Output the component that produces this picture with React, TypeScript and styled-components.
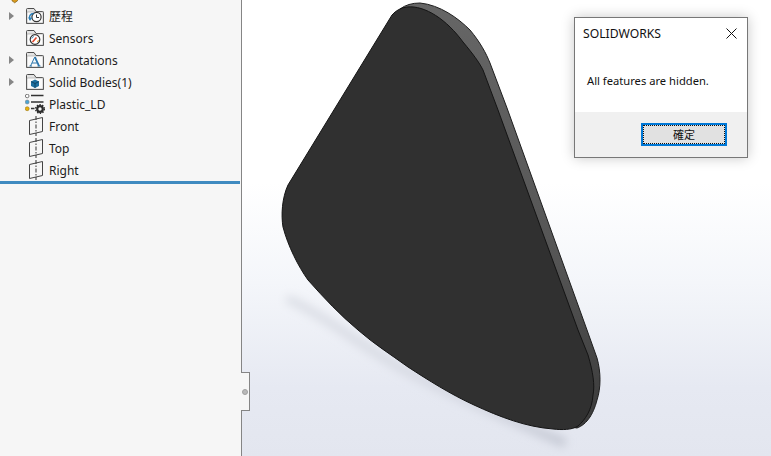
import React from "react";
import styled, { createGlobalStyle } from "styled-components";

const Global = createGlobalStyle`
  html, body { margin: 0; padding: 0; width: 771px; height: 456px; overflow: hidden; background: #fff; }
  #root { width: 771px; height: 456px; }
`;

const Page = styled.div`
  display: flex;
  width: 771px;
  height: 456px;
  overflow: hidden;
  font-family: "Noto Sans", "Open Sans", "Noto Sans CJK TC", sans-serif;
`;

const Sidebar = styled.aside`
  display: flex;
  flex-direction: column;
  width: 241px;
  flex: none;
  background: #f6f6f6;
  border-right: 1px solid #858585;
  overflow: hidden;
`;

const Tree = styled.ul`
  list-style: none;
  margin: -17px 0 0;
  padding: 0;
`;

const Row = styled.li`
  display: flex;
  align-items: center;
  height: 22px;
  padding-left: 9px;
  font-size: 12px;
  color: #1c1c1c;
`;

const ArrowSlot = styled.span`
  display: flex;
  width: 16px;
  flex: none;
`;

const Arrow = styled.span`
  width: 0;
  height: 0;
  border-left: 5px solid #868686;
  border-top: 4px solid transparent;
  border-bottom: 4px solid transparent;
`;

const IconSlot = styled.span`
  display: flex;
  width: 20px;
  height: 20px;
  margin-right: 4px;
  flex: none;
`;

const Divider = styled.div`
  height: 3px;
  background: #3f8ac0;
  width: 240px;
`;

const Viewport = styled.main`
  position: relative;
  flex: 1;
  background: linear-gradient(180deg, #ffffff 0%, #ffffff 40%, #f4f6fa 62%, #e6e9f2 85%, #e3e6ef 100%);
`;

const Model = styled.svg`
  position: absolute;
  inset: 0;
  width: 100%;
  height: 100%;
`;

const Grip = styled.div`
  position: absolute;
  left: -1px;
  top: 372px;
  width: 8px;
  height: 37px;
  background: #f6f6f6;
  border: 1px solid #858585;
  border-left: none;
  display: flex;
  align-items: center;
  justify-content: center;
`;

const GripDot = styled.span`
  width: 6px;
  height: 6px;
  border-radius: 50%;
  background: #b9b9b9;
  border: 1px solid #a0a0a0;
  box-sizing: border-box;
`;

const Dialog = styled.section`
  position: absolute;
  left: 332px;
  top: 17px;
  width: 174px;
  height: 141px;
  box-sizing: border-box;
  display: flex;
  flex-direction: column;
  background: #fff;
  border: 1px solid #777;
  box-shadow: 0 0 12px rgba(0, 0, 0, 0.22);
  font-family: "Noto Sans", "Open Sans", "Noto Sans CJK TC", sans-serif;
  color: #111;
`;

const TitleBar = styled.header`
  display: flex;
  align-items: center;
  justify-content: space-between;
  height: 28px;
  padding: 1px 10px 0 8px;
  font-size: 12.2px;
`;

const Message = styled.p`
  flex: 1;
  margin: 0;
  padding: 26px 0 0 12px;
  font-size: 11.2px;
`;

const Footer = styled.footer`
  display: flex;
  justify-content: flex-end;
  height: 45px;
  box-sizing: border-box;
  padding: 11px 20px 0 0;
  background: #f0f0f0;
`;

const OkButton = styled.button`
  width: 86px;
  height: 23px;
  box-sizing: border-box;
  padding: 0 0 2px;
  border: 2px solid #0078d7;
  outline: 1px dotted #111;
  outline-offset: -3px;
  background: #e1e1e1;
  font-family: "Noto Sans CJK TC", sans-serif;
  font-size: 11px;
  color: #111;
`;

const Folder: React.FC<{ children?: React.ReactNode }> = ({ children }) => (
  <svg width="20" height="20" viewBox="0 0 20 20">
    <path d="M1.5 17.5V3.5Q1.5 2.5 2.5 2.5H9L11 5.5H17.5Q18.5 5.5 18.5 6.5V17.5Z" fill="#e4e4e4" stroke="#4c4c4c" />
    <rect x="2" y="6" width="16" height="11" fill="#fbfbfb" stroke="#8a8a8a" strokeWidth="0.5" />
    {children}
  </svg>
);

const HistoryIcon = () => (
  <Folder>
    <circle cx="11.5" cy="11" r="4.6" fill="#fff" stroke="#333" strokeWidth="1.2" />
    <path d="M11.5 8.5V11.5H14" fill="none" stroke="#333" />
    <path d="M5 13.5A4 4 0 0 1 8.5 7.5" fill="none" stroke="#2b7fb8" strokeWidth="1.5" />
    <path d="M3 11.5H7.5L5 15z" fill="#2b7fb8" />
  </Folder>
);
const SensorIcon = () => (
  <Folder>
    <circle cx="10" cy="11.5" r="4.8" fill="#fff" stroke="#333" strokeWidth="1.2" />
    <path d="M7.5 14l4-4.5" stroke="#e0452b" strokeWidth="1.6" />
    <path d="M6.8 10.5a3.5 3.5 0 0 1 2-2" stroke="#2b7fb8" fill="none" />
    <path d="M12 14a3 3 0 0 0 1.5-2" stroke="#e89b2c" fill="none" />
  </Folder>
);
const AnnotationIcon = () => (
  <Folder>
    <path d="M5.5 16 9.5 7.5M9.5 7 14 16M7 13H12.5M4.5 16H7M12.5 16H15.5" fill="none" stroke="#2f78ad" strokeWidth="1" />
    <path d="M10 7 14 16" fill="none" stroke="#2f78ad" strokeWidth="1.8" />
  </Folder>
);
const SolidIcon = () => (
  <Folder>
    <path d="M10 7.5l4 2v4.5l-4 2-4-2V9.5z" fill="#1d6f9f" />
    <path d="M6 9.5l4 2 4-2M10 11.5V16" fill="none" stroke="#0c3a58" strokeWidth="0.8" />
  </Folder>
);
const MaterialIcon = () => (
  <svg width="20" height="20" viewBox="0 0 20 20">
    <circle cx="2.2" cy="2" r="1.8" fill="#fff" stroke="#777" />
    <circle cx="2.2" cy="8" r="2" fill="#4aa5d6" stroke="#777" strokeWidth="0.5" />
    <circle cx="2.2" cy="14.7" r="2" fill="#e8b010" stroke="#8a6a00" strokeWidth="0.5" />
    <path d="M6 1.5H18.5M6 8H18.5M6 14.5H9.5" stroke="#333" strokeWidth="1.5" />
    <circle cx="15" cy="15" r="2.8" fill="none" stroke="#2b2b2b" strokeWidth="2.2" />
    <circle cx="15" cy="15" r="4.4" fill="none" stroke="#2b2b2b" strokeWidth="1.3" strokeDasharray="1.4 1.4" />
  </svg>
);
const PlaneIcon = () => (
  <svg width="20" height="20" viewBox="0 0 20 20">
    <path d="M4.5 4.5 17.5 1.5V15.5L4.5 18.5Z" fill="none" stroke="#444" />
    <path d="M11 0V21" stroke="#333" strokeDasharray="4 1.5 1.5 1.5" />
  </svg>
);
const PartIcon = () => (
  <svg width="20" height="20" viewBox="0 0 20 20">
    <path d="M3 15H8.5V16.8L5.7 18.8L3 16.8Z" fill="#d99a1e" stroke="#7b5a10" strokeWidth="0.7" />
  </svg>
);
const Close = () => (
  <svg width="11" height="11" viewBox="0 0 11 11">
    <path d="M.5.5l10 10M10.5.5l-10 10" stroke="#111" />
  </svg>
);

const items: { label: string; icon: React.ReactNode; arrow?: boolean }[] = [
  { label: "歷程", icon: <HistoryIcon />, arrow: true },
  { label: "Sensors", icon: <SensorIcon /> },
  { label: "Annotations", icon: <AnnotationIcon />, arrow: true },
  { label: "Solid Bodies(1)", icon: <SolidIcon />, arrow: true },
  { label: "Plastic_LD", icon: <MaterialIcon /> },
  { label: "Front", icon: <PlaneIcon /> },
  { label: "Top", icon: <PlaneIcon /> },
  { label: "Right", icon: <PlaneIcon /> },
];

const FACE =
  "M392 15Q398 8 407 7C425 5 447 20 463 42C473 54 479 62 483 70L498 110L578 330L588 355C593 372 595 385 593 395C592 410 585 420 578 426C572 430 562 430 553 429C526 427 500 417 474 405C450 394 428 380 408 367C390 354 374 344 358 330C340 315 324 298 308 280C298 266 288 246 283 227C281 215 282 198 288 185Z";
const BODY =
  "M400 9Q408 3 420 3C440 5 458 18 470 30C480 42 486 53 490 63L507 108L587 330L597 358C601 372 601 388 597 400C595 408 592 414 590 417C586 423 582 426 577 428L560 425L500 120L400 12Z";

export default function App() {
  return (
    <Page>
      <Global />
      <Sidebar>
        <Tree>
          <Row>
            <IconSlot>
              <PartIcon />
            </IconSlot>
          </Row>
          {items.map((it) => (
            <Row key={it.label}>
              <ArrowSlot>{it.arrow && <Arrow />}</ArrowSlot>
              <IconSlot>{it.icon}</IconSlot>
              {it.label}
            </Row>
          ))}
        </Tree>
        <Divider />
      </Sidebar>
      <Viewport>
        <Model viewBox="242 0 529 456">
          <defs>
            <filter id="soft" x="-30%" y="-30%" width="160%" height="160%">
              <feGaussianBlur stdDeviation="5" />
            </filter>
            <linearGradient id="edge" x1="0" y1="0" x2="0" y2="1">
              <stop offset="0" stopColor="#666" />
              <stop offset="0.6" stopColor="#555" />
              <stop offset="1" stopColor="#3a3a3a" />
            </linearGradient>
            <linearGradient id="shade" x1="0" y1="0" x2="1" y2="0">
              <stop offset="0" stopColor="#dcdfe6" />
              <stop offset="0.7" stopColor="#d3d6e0" />
              <stop offset="1" stopColor="#c4c8d3" />
            </linearGradient>
          </defs>
          <path
            d="M290 300C330 318 370 354 420 378C470 404 520 424 562 442"
            fill="none"
            stroke="url(#shade)"
            strokeWidth="9"
            strokeLinecap="round"
            filter="url(#soft)"
          />
          <path d={BODY} fill="url(#edge)" stroke="#1e1e1e" strokeWidth="1" />
          <path d={FACE} fill="#303030" stroke="#141414" strokeWidth="1" />
        </Model>
        <Grip>
          <GripDot />
        </Grip>
        <Dialog>
          <TitleBar>
            SOLIDWORKS
            <Close />
          </TitleBar>
          <Message>All features are hidden.</Message>
          <Footer>
            <OkButton>確定</OkButton>
          </Footer>
        </Dialog>
      </Viewport>
    </Page>
  );
}
